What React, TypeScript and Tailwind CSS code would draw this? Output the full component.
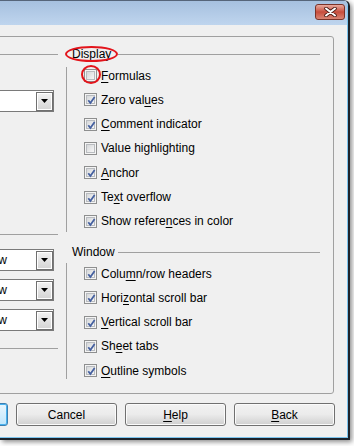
import { JSX } from "react";

type Item = {
  readonly label: string;
  readonly key?: number; // index of the underlined access key
  readonly checked: boolean;
};

const DISPLAY_ITEMS: Item[] = [
  { label: "Formulas", key: 0, checked: false },
  { label: "Zero values", key: 8, checked: true },
  { label: "Comment indicator", key: 0, checked: true },
  { label: "Value highlighting", checked: false },
  { label: "Anchor", key: 0, checked: true },
  { label: "Text overflow", key: 2, checked: true },
  { label: "Show references in color", key: 11, checked: true },
];

const WINDOW_ITEMS: Item[] = [
  { label: "Column/row headers", key: 4, checked: true },
  { label: "Horizontal scroll bar", key: 4, checked: true },
  { label: "Vertical scroll bar", key: 0, checked: true },
  { label: "Sheet tabs", key: 2, checked: true },
  { label: "Outline symbols", key: 0, checked: true },
];

function Label({ text, at }: { text: string; at?: number }): JSX.Element {
  if (at === undefined) return <span>{text}</span>;
  return (
    <span>
      {text.slice(0, at)}
      <u className="underline-offset-2">{text[at]}</u>
      {text.slice(at + 1)}
    </span>
  );
}

function CheckBox({ checked }: { checked: boolean }): JSX.Element {
  return (
    <div className="h-[13px] w-[13px] shrink-0 border border-[#8e8f8f] bg-[#f4f4f4] p-px">
      <div className="relative h-full w-full border border-[#b9bcc0] bg-gradient-to-br from-[#d6d8da] to-[#f7f7f7]">
        {checked && (
          <svg
            className="absolute left-[-1px] top-[-1px]"
            width="11"
            height="11"
            viewBox="0 0 11 11"
          >
            <path
              d="M2.3 5.3 L4.4 8 L8.6 2"
              fill="none"
              stroke="#4661a0"
              strokeWidth="1.8"
            />
          </svg>
        )}
      </div>
    </div>
  );
}

function Row({ item }: { item: Item }): JSX.Element {
  return (
    <div className="flex h-[13px] items-center gap-[4px] whitespace-nowrap">
      <CheckBox checked={item.checked} />
      <Label text={item.label} at={item.key} />
    </div>
  );
}

function Header({ title }: { title: string }): JSX.Element {
  return (
    <div className="flex h-[16px] items-center pl-[6px]">
      <span className="w-[46px] leading-none">{title}</span>
      <div className="h-px flex-1 bg-[#a0a0a0]" />
    </div>
  );
}

function Dropdown({ text }: { text?: string }): JSX.Element {
  return (
    <div className="ml-[4px] flex h-[22px] w-[80px] items-center border border-[#7a7a7a] bg-white">
      <span className="flex-1 pl-[2px]">{text}</span>
      <div className="flex h-[19px] w-[17px] items-center justify-center border border-[#707070] bg-gradient-to-b from-[#f3f3f3] to-[#d4d4d4] shadow-[inset_0_0_0_1px_#ffffff]">
        <svg width="7" height="4" viewBox="0 0 7 4">
          <path d="M0 0h7L3.5 4z" fill="#000" />
        </svg>
      </div>
    </div>
  );
}

function DialogButton({
  label,
  at,
  focused,
}: {
  label: string;
  at?: number;
  focused?: boolean;
}): JSX.Element {
  return (
    <div
      className={
        focused
          ? "flex h-[23px] w-[101px] shrink-0 items-center justify-center rounded-[3px] border border-[#3c7fb1] bg-gradient-to-b from-[#eaf6fd] to-[#bee6fd] shadow-[inset_0_0_0_1px_#48b1ef]"
          : "flex h-[23px] w-[101px] shrink-0 items-center justify-center rounded-[3px] border border-[#707070] bg-gradient-to-b from-[#f2f2f2] via-[#ebebeb] to-[#cfcfcf] shadow-[inset_0_0_0_1px_#fbfbfb]"
      }
    >
      <Label text={label} at={at} />
    </div>
  );
}

export default function App(): JSX.Element {
  return (
    <div className="relative h-[446px] w-[354px] overflow-hidden bg-white font-['Liberation_Sans',Arial,sans-serif] text-[12px] text-black">
      <div className="flex h-[440px] w-[350px] flex-col overflow-hidden rounded-tr-[6px] border-r-2 border-b-2 border-t border-[#1d232b] border-t-[#56657a] shadow-[2px_2px_5px_rgba(0,0,0,0.45)]">
        <div className="flex flex-1 flex-col border-r border-b border-[#7cc4ee]">
          {/* title bar */}
          <div className="flex h-[24px] shrink-0 justify-end bg-gradient-to-b from-[#a6c0df] to-[#bfd5ee] pr-[2px] pt-[3px]">
            <div className="flex h-[16px] w-[30px] items-center justify-center rounded-[3px] border border-[#7a3228] bg-gradient-to-b from-[#e8aa9f] via-[#c64c3c] to-[#d98474]">
              <svg width="13" height="10" viewBox="0 0 13 10">
                <path
                  d="M2 1.5 L11 8.5 M11 1.5 L2 8.5"
                  stroke="#4a1a14"
                  strokeWidth="3.6"
                  strokeLinecap="round"
                />
                <path
                  d="M2 1.5 L11 8.5 M11 1.5 L2 8.5"
                  stroke="#ffffff"
                  strokeWidth="2"
                  strokeLinecap="round"
                />
              </svg>
            </div>
          </div>

          {/* client area */}
          <div className="flex flex-1 flex-col bg-[#f0f0f0]">
            <div className="-ml-[31px] mt-[11px] flex h-[358px] w-[365px] rounded-[3px] border border-[#a0a0a0]">
              {/* left column, mostly cut off by the screenshot */}
              <div className="flex w-[88px] shrink-0 flex-col">
                <div className="mt-[17px] h-px bg-[#a0a0a0]" />
                <div className="mt-[35px]">
                  <Dropdown />
                </div>
                <div className="mt-[122px] h-px bg-[#a0a0a0]" />
                <div className="mt-[14px] flex flex-col gap-[8px]">
                  <Dropdown text="Show" />
                  <Dropdown text="Show" />
                  <Dropdown text="Show" />
                </div>
                <div className="mt-[17px] h-px bg-[#a0a0a0]" />
              </div>

              {/* right column */}
              <div className="ml-[8px] flex w-[254px] shrink-0 flex-col">
                <div className="mt-[9px]">
                  <Header title="Display" />
                </div>
                <div className="mt-[5px] flex h-[165px] flex-col gap-[11.33px] border-l border-[#a0a0a0] pl-[17px] pt-[2px]">
                  {DISPLAY_ITEMS.map((item) => (
                    <Row key={item.label} item={item} />
                  ))}
                </div>
                <div className="mt-[12px]">
                  <Header title="Window" />
                </div>
                <div className="mt-[3px] flex h-[116px] flex-col gap-[11.33px] border-l border-[#a0a0a0] pl-[17px] pt-[4px]">
                  {WINDOW_ITEMS.map((item) => (
                    <Row key={item.label} item={item} />
                  ))}
                </div>
              </div>
            </div>

            <div className="mt-[9px] flex justify-end gap-[8px] pr-[12px]">
              <DialogButton label="OK" focused />
              <DialogButton label="Cancel" />
              <DialogButton label="Help" at={0} />
              <DialogButton label="Back" at={0} />
            </div>
          </div>
        </div>
      </div>

      {/* red annotation marks */}
      <div className="absolute left-[65px] top-[46px] h-[16px] w-[53px] rounded-[50%] border-2 border-[#e3141b]" />
      <div className="absolute left-[81px] top-[65px] h-[19px] w-[20px] rounded-[50%] border-2 border-[#e3141b]" />
    </div>
  );
}
